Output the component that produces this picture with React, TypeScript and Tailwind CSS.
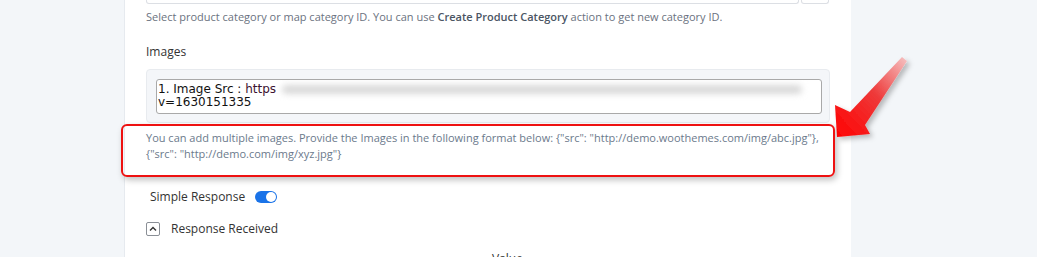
import React from 'react'

const sans = { fontFamily: '"Open Sans", "Noto Sans", sans-serif' }

function Arrow() {
  return (
    <svg className="absolute left-[820px] top-[45px]" width="110" height="110" viewBox="0 0 110 110">
      <defs>
        <linearGradient id="ag" x1="1" y1="0" x2="0" y2="1">
          <stop offset="0" stopColor="#f6c4c4" />
          <stop offset="0.45" stopColor="#ee3a3a" />
          <stop offset="1" stopColor="#ff0000" />
        </linearGradient>
        <filter id="sh" x="-30%" y="-30%" width="160%" height="160%">
          <feDropShadow dx="3" dy="3" stdDeviation="2.5" floodColor="#000" floodOpacity="0.25" />
        </filter>
      </defs>
      <polygon
        points="82,12 30,67 15,60 17,92 50,89 45,80 87,16"
        fill="url(#ag)"
        filter="url(#sh)"
      />
    </svg>
  )
}

export default function App() {
  return (
    <div className="relative h-[257px] w-[1037px] overflow-hidden bg-[#f3f6f9]" style={sans}>
      <div className="ml-[124px] h-full w-[727px] border-l border-[#e6eaef] bg-white px-[21px]">
        <div className="flex">
          <div className="h-[4px] w-[653px] rounded-b-[3px] border-x border-b border-[#dcdfe4]" />
          <div className="ml-[2px] h-[4px] w-[28px] rounded-b-[3px] border-x border-b border-[#dcdfe4]" />
        </div>
        <p className="mt-[5px] whitespace-nowrap text-[11px] leading-[15px] text-[#6b7280]">
          Select product category or map category ID. You can use{' '}
          <span className="font-semibold text-[#4b5563]">Create Product Category</span> action to get new category ID.
        </p>
        <p className="mt-[19px] text-[12px] leading-[18px] text-[#333]">Images</p>
        <div className="mt-[8px] rounded-[4px] border border-[#e8ebef] bg-[#f4f6f9] pb-[8px] pl-[9px] pr-[7px] pt-[9px]">
          <div
            className="relative h-[35px] overflow-hidden rounded-[3px] border border-[#a9a9a9] bg-white px-[1px] pt-[3px] text-[12px] leading-[13px] text-[#111]"
            style={{ fontFamily: '"DejaVu Sans", Verdana, sans-serif' }}
          >
            <div className="flex items-center">
              <span>1. Image Src : </span>
              <span className="text-[#3b1230]">&nbsp;https</span>
              <span className="ml-[6px] h-[9px] w-[520px] rounded-full bg-[#d9d9d9] blur-[3px]" />
            </div>
            <div>v=1630151335</div>
          </div>
        </div>
        <p className="mt-[7px] whitespace-nowrap text-[11px] leading-[16px] text-[#6b7a8c]">
          You can add multiple images. Provide the Images in the following format below: {'{"src": "http://demo.woothemes.com/img/abc.jpg"},'}
          <br />
          {'{"src": "http://demo.com/img/xyz.jpg"}'}
        </p>
        <div className="ml-[4px] mt-[26px] flex items-center gap-[10px]">
          <span className="text-[12px] leading-[18px] text-[#333]">Simple Response</span>
          <span className="flex h-[12px] w-[22px] items-center justify-end rounded-full bg-[#1a73e8] pr-[1px]">
            <span className="h-[10px] w-[10px] rounded-full bg-white" />
          </span>
        </div>
        <div className="mt-[14px] flex items-center gap-[11px]">
          <span className="flex h-[14px] w-[14px] items-center justify-center rounded-[2px] border border-[#8a8f96]">
            <svg width="8" height="6" viewBox="0 0 8 6" fill="none" stroke="#333" strokeWidth="1.4">
              <path d="M1 4.5 L4 1.5 L7 4.5" />
            </svg>
          </span>
          <span className="text-[12px] leading-[18px] text-[#333]">Response Received</span>
        </div>
        <div className="mt-[13px] pl-[346px] text-[12px] leading-[16px] text-[#333]">Value</div>
      </div>
      <div className="pointer-events-none absolute left-[121px] top-[124px] h-[53px] w-[714px] rounded-[6px] border-2 border-[#ee1111] shadow-[2px_3px_6px_rgba(0,0,0,0.25)]" />
      <Arrow />
    </div>
  )
}
